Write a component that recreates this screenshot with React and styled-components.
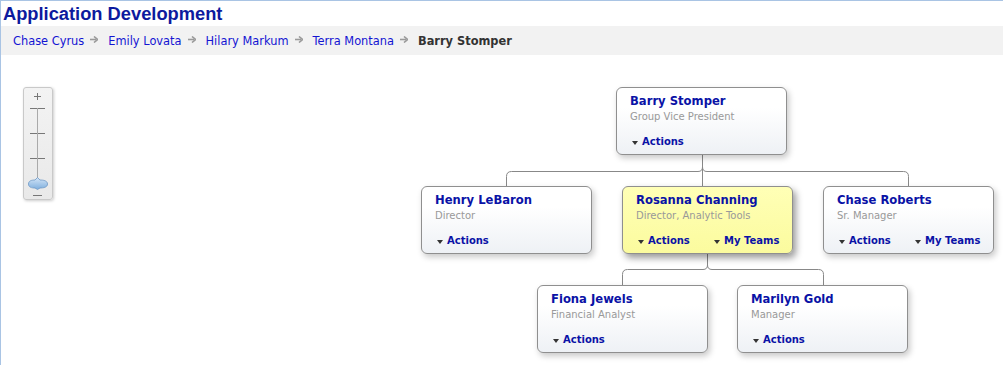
import React from "react";
import styled, { createGlobalStyle } from "styled-components";

const GlobalStyle = createGlobalStyle`
  html, body {
    margin: 0;
    padding: 0;
    background: #fff;
  }
  body {
    font-family: "DejaVu Sans", Verdana, sans-serif;
  }
`;

const Frame = styled.div`
  border-top: 1px solid #a9c4e4;
  border-left: 1px solid #a9c4e4;
  height: 365px;
  box-sizing: border-box;
  overflow: hidden;
`;

const Title = styled.h1`
  margin: 0;
  padding-left: 2px;
  height: 25px;
  line-height: 25px;
  font-family: "Liberation Sans", Arial, sans-serif;
  font-size: 18.3px;
  font-weight: bold;
  color: #0d1a9e;
`;

const Crumbs = styled.nav`
  display: flex;
  align-items: center;
  height: 29px;
  padding-left: 12px;
  background: #f2f2f2;
  font-size: 11.4px;
`;

const Crumb = styled.a`
  color: ${(p) => (p.$current ? "#333" : "#1414d2")};
  font-weight: ${(p) => (p.$current ? "bold" : "normal")};
  text-decoration: none;
  cursor: ${(p) => (p.$current ? "default" : "pointer")};
`;

const ArrowIcon = styled.svg`
  width: 8px;
  height: 7px;
  margin: 0 10px 3px 6px;
`;

const Canvas = styled.div`
  position: relative;
  height: 310px;
`;

const ZoomBox = styled.div`
  position: absolute;
  left: 22px;
  top: 32px;
  width: 30px;
  height: 113px;
  box-sizing: border-box;
  border: 1px solid #c9c9c9;
  border-radius: 3px;
  background: linear-gradient(#f3f3f3, #e9e9e9);
  box-shadow: 1px 1px 3px rgba(0, 0, 0, 0.2);
`;

const Lines = styled.svg`
  position: absolute;
  left: 0;
  top: 0;
  width: 1002px;
  height: 310px;
  pointer-events: none;
`;

const Card = styled.div`
  position: absolute;
  width: 171px;
  height: 68px;
  box-sizing: border-box;
  display: flex;
  flex-direction: column;
  padding: 7px 10px 6px 13px;
  border: 1px solid #8f8f8f;
  border-radius: 6px;
  background: ${(p) =>
    p.$selected
      ? "linear-gradient(#ffffb6, #fbfb9e)"
      : "linear-gradient(#ffffff 30%, #eef1f5)"};
  box-shadow: ${(p) =>
    p.$selected
      ? "3px 4px 7px rgba(0, 0, 0, 0.4)"
      : "2px 3px 6px rgba(0, 0, 0, 0.22)"};
`;

const Name = styled.div`
  font-size: 11.6px;
  line-height: 13px;
  font-weight: bold;
  color: #0a12a6;
  white-space: nowrap;
`;

const Role = styled.div`
  margin-top: 2px;
  font-size: 10px;
  line-height: 13px;
  color: #999;
  white-space: nowrap;
`;

const ActionRow = styled.div`
  margin-top: auto;
  margin-left: 2px;
  display: grid;
  grid-template-columns: 76px auto;
  align-items: center;
`;

const Action = styled.a`
  display: flex;
  align-items: center;
  font-size: 10px;
  line-height: 12px;
  font-weight: bold;
  color: #0a12a6;
  white-space: nowrap;
  cursor: pointer;

  &::before {
    content: "";
    width: 0;
    height: 0;
    margin: 1px 4px 0 0;
    border-left: 3px solid transparent;
    border-right: 3px solid transparent;
    border-top: 4px solid #333;
  }
`;

const crumbs = ["Chase Cyrus", "Emily Lovata", "Hilary Markum", "Terra Montana"];

const people = [
  { name: "Barry Stomper", role: "Group Vice President", x: 615, y: 32 },
  { name: "Henry LeBaron", role: "Director", x: 420, y: 131 },
  {
    name: "Rosanna Channing",
    role: "Director, Analytic Tools",
    x: 621,
    y: 131,
    teams: true,
    selected: true,
  },
  { name: "Chase Roberts", role: "Sr. Manager", x: 822, y: 131, teams: true },
  { name: "Fiona Jewels", role: "Financial Analyst", x: 536, y: 230 },
  { name: "Marilyn Gold", role: "Manager", x: 736, y: 230 },
];

function Arrow() {
  return (
    <ArrowIcon viewBox="0 0 8 7">
      <path d="M0 3.5 H6" stroke="#9a9a9a" strokeWidth="1.6" />
      <path d="M4 0.5 L7.5 3.5 L4 6.5" fill="none" stroke="#9a9a9a" strokeWidth="1.6" />
    </ArrowIcon>
  );
}

function ZoomControl() {
  return (
    <ZoomBox>
      <svg width="28" height="111" viewBox="0 0 28 111">
        <g stroke="#777" strokeWidth="1">
          <path d="M13.5 5 V12 M10 8.5 H17" />
          <path d="M6 20.5 H21 M6 45.5 H21 M6 70.5 H21" />
          <path d="M13.5 20 V92" stroke="#aaa" />
          <path d="M9 107.5 H18" />
        </g>
        <defs>
          <linearGradient id="knob" x1="0" y1="0" x2="0" y2="1">
            <stop offset="0" stopColor="#d4e6f8" />
            <stop offset="1" stopColor="#7eaedd" />
          </linearGradient>
        </defs>
        <path
          d="M4.5 96 C4.5 92.5 8 92 11 92 L13.5 89.5 L16 92 C19 92 23.5 92.5 23.5 96 C23.5 99.5 19 100 16 100 L13.5 101.5 L11 100 C8 100 4.5 99.5 4.5 96 Z"
          fill="url(#knob)"
          stroke="#6d98c6"
          strokeWidth="0.8"
        />
      </svg>
    </ZoomBox>
  );
}

function Connectors() {
  return (
    <Lines viewBox="0 0 1002 310">
      <g fill="none" stroke="#888" strokeWidth="1">
        <path d="M701.5 100 V131" />
        <path d="M701.5 112 Q701.5 116.5 697 116.5 H510.5 Q505.5 116.5 505.5 121.5 V131" />
        <path d="M701.5 112 Q701.5 116.5 706 116.5 H902.5 Q907.5 116.5 907.5 121.5 V131" />
        <path d="M706.5 199 V210 Q706.5 214.5 702 214.5 H626.5 Q621.5 214.5 621.5 219.5 V230" />
        <path d="M706.5 210 Q706.5 214.5 711 214.5 H817.5 Q822.5 214.5 822.5 219.5 V230" />
      </g>
    </Lines>
  );
}

export default function App() {
  return (
    <Frame>
      <GlobalStyle />
      <Title>Application Development</Title>
      <Crumbs>
        {crumbs.map((c) => (
          <React.Fragment key={c}>
            <Crumb>{c}</Crumb>
            <Arrow />
          </React.Fragment>
        ))}
        <Crumb $current>Barry Stomper</Crumb>
      </Crumbs>
      <Canvas>
        <ZoomControl />
        <Connectors />
        {people.map((p) => (
          <Card key={p.name} $selected={p.selected} style={{ left: p.x, top: p.y }}>
            <Name>{p.name}</Name>
            <Role>{p.role}</Role>
            <ActionRow>
              <Action>Actions</Action>
              {p.teams && <Action>My Teams</Action>}
            </ActionRow>
          </Card>
        ))}
      </Canvas>
    </Frame>
  );
}
